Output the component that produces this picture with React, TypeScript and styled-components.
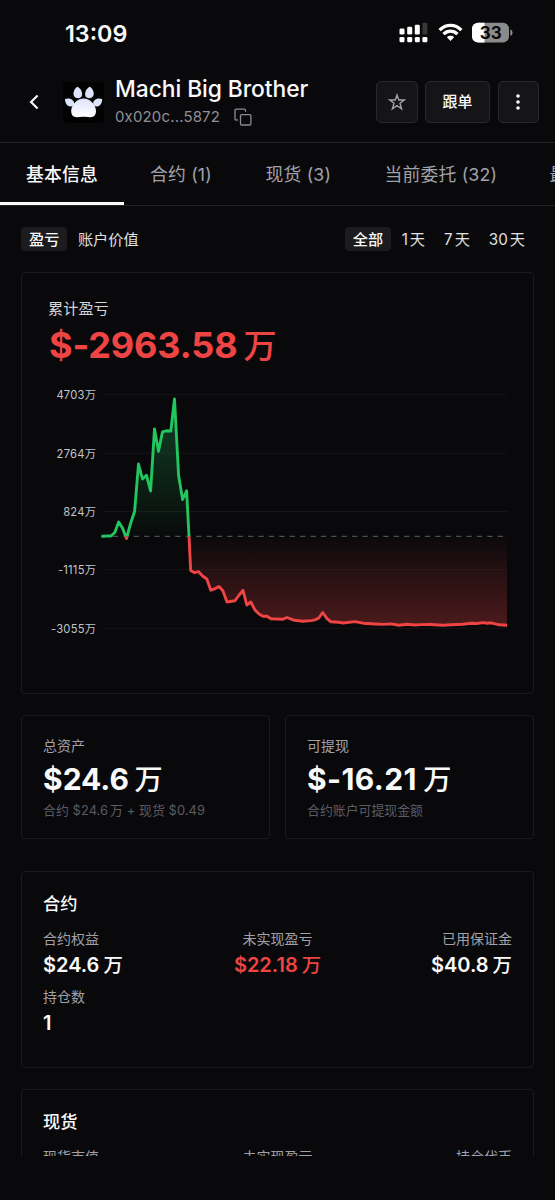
import React from "react";
import styled, { createGlobalStyle } from "styled-components";

const GlobalStyle = createGlobalStyle`
  * { box-sizing: border-box; }
  body {
    margin: 0;
    background: #09090b;
    color: #fafafa;
    font-family: Inter, "Noto Sans CJK SC", sans-serif;
  }
`;

const Screen = styled.div`
  width: 555px;
  height: 1200px;
  display: flex;
  flex-direction: column;
  overflow: hidden;
  background: #09090b;
`;

const StatusBar = styled.div`
  height: 62px;
  flex: none;
  display: flex;
  justify-content: space-between;
  padding: 21px 41px 0 65px;
`;

const Clock = styled.div`
  font-size: 23.3px;
  line-height: 26px;
  font-weight: 600;
  letter-spacing: 0;
`;

const StatusIcons = styled.div`
  display: flex;
  gap: 9.5px;
  padding-top: 1px;
`;

const Header = styled.header`
  height: 81px;
  flex: none;
  display: flex;
  align-items: center;
  padding: 0 16px 0 24px;
  border-bottom: 1px solid #242427;
`;

const BackButton = styled.button`
  width: 20px;
  height: 24px;
  padding: 0;
  border: 0;
  background: none;
  color: #fafafa;
  display: flex;
  align-items: center;
  justify-content: center;
`;

const Avatar = styled.div`
  width: 41px;
  height: 41px;
  margin-left: 19px;
  border-radius: 4px;
  background: #020203;
`;

const Identity = styled.div`
  flex: 1;
  margin-left: 11px;
`;

const Name = styled.div`
  font-size: 22.8px;
  line-height: 30px;
  font-weight: 500;
  letter-spacing: -0.05px;
  white-space: nowrap;
`;

const Address = styled.div`
  display: flex;
  align-items: center;
  gap: 14px;
  font-size: 15px;
  line-height: 26px;
  letter-spacing: 0.15px;
  color: #8f8f97;
`;

const Actions = styled.div`
  display: flex;
  gap: 7.5px;
`;

const ActionButton = styled.button<{ $width: number }>`
  width: ${(p) => p.$width}px;
  height: 42px;
  padding: 0;
  display: flex;
  align-items: center;
  justify-content: center;
  border: 1px solid #2a2a2d;
  border-radius: 5px;
  background: #151517;
  color: #fafafa;
  font: 500 15px/20px Inter, "Noto Sans CJK SC", sans-serif;
`;

const Tabs = styled.nav`
  height: 63px;
  flex: none;
  display: flex;
  overflow: hidden;
  border-bottom: 1px solid #242427;
`;

const Tab = styled.div<{ $width: number; $active?: boolean }>`
  flex: 0 0 ${(p) => p.$width}px;
  padding: 18px 0 0 26px;
  font-size: 17.8px;
  line-height: 28px;
  letter-spacing: 0.2px;
  white-space: nowrap;
  font-weight: ${(p) => (p.$active ? 500 : 400)};
  color: ${(p) => (p.$active ? "#fafafa" : "#a1a1aa")};
  border-bottom: 3px solid ${(p) => (p.$active ? "#fafafa" : "transparent")};
`;

const Content = styled.main`
  flex: 1;
  min-height: 0;
  overflow: hidden;
  padding: 21px 21px 0;
`;

const HomeArea = styled.div`
  height: 44px;
  flex: none;
`;

const FilterRow = styled.div`
  display: flex;
  justify-content: space-between;
  height: 24px;
  margin-bottom: 21px;
`;

const FilterGroup = styled.div<{ $gap: number }>`
  display: flex;
  gap: ${(p) => p.$gap}px;
`;

const Filter = styled.div<{ $active?: boolean; $end?: number }>`
  height: 24px;
  padding: 1px ${(p) => (p.$active ? 8 : 0)}px 0;
  margin-right: ${(p) => p.$end ?? 0}px;
  border-radius: 4px;
  background: ${(p) => (p.$active ? "#1c1c1f" : "transparent")};
  font-size: 15.2px;
  line-height: 24px;
  white-space: nowrap;
  font-weight: ${(p) => (p.$active ? 500 : 400)};
  color: ${(p) => (p.$active ? "#fafafa" : "#e0e0e3")};
`;

const Unit = styled.span<{ $gap: number; $size?: number }>`
  margin-left: ${(p) => p.$gap}px;
  font-size: ${(p) => p.$size ?? 1}em;
`;

const Card = styled.section<{ $height: number; $top?: number }>`
  height: ${(p) => p.$height}px;
  margin-top: ${(p) => p.$top ?? 0}px;
  border: 1px solid #1b1b1e;
  border-radius: 4px;
  padding: 20px 21px;
`;

const ChartCard = styled(Card)`
  padding: 24px 26px 0;
`;

const ChartTitle = styled.div`
  font-size: 15.2px;
  line-height: 24px;
  color: #d4d4d8;
`;

const Total = styled.div`
  height: 48px;
  padding-left: 1px;
  font-size: 36px;
  line-height: 48px;
  margin-bottom: 16px;
  font-weight: 700;
  letter-spacing: -0.15px;
  color: #ef4444;
  white-space: nowrap;
`;

const ChartSvg = styled.svg`
  display: block;
`;

const Pair = styled.div`
  display: grid;
  grid-template-columns: 1fr 1fr;
  gap: 15px;
`;

const Label = styled.div`
  font-size: 14px;
  line-height: 20px;
  color: #a1a1aa;
  white-space: nowrap;
`;

const Amount = styled.div<{ $tracking?: number }>`
  height: 38px;
  margin-top: 4px;
  font-size: 30px;
  line-height: 38px;
  font-weight: 700;
  letter-spacing: ${(p) => p.$tracking ?? 0}px;
  white-space: nowrap;
`;

const Note = styled.div<{ $tracking?: number }>`
  margin-top: 3px;
  font-size: 12.9px;
  line-height: 20px;
  letter-spacing: ${(p) => p.$tracking ?? 0}px;
  color: #5b5b63;
  white-space: nowrap;
`;

const SectionTitle = styled.h2`
  margin: 0 0 13px;
  font-size: 17.2px;
  line-height: 24px;
  font-weight: 500;
`;

const Stats = styled.div`
  display: grid;
  grid-template-columns: repeat(3, 1fr);
  row-gap: 8px;
`;

const Stat = styled.div<{ $align?: string }>`
  text-align: ${(p) => p.$align ?? "left"};
`;

const StatValue = styled.div<{ $negative?: boolean }>`
  height: 28px;
  margin-top: 2px;
  font-size: 20px;
  line-height: 28px;
  font-weight: 600;
  white-space: nowrap;
  color: ${(p) => (p.$negative ? "#ef4444" : "#fafafa")};
`;

const HeavyUnit = styled(Unit)`
  font-weight: 500;
`;

const Wan = ({ gap, size }: { gap: number; size?: number }) => (
  size ? <HeavyUnit $gap={gap} $size={size}>万</HeavyUnit> : <Unit $gap={gap}>万</Unit>
);

const Day = () => <Unit $gap={2}>天</Unit>;

const LINE: [number, number][] = [
  [102.5, 536.3], [107, 536], [111, 536], [114.8, 532.5], [118.7, 522], [122.5, 528], [126.5, 538.5],
  [130.7, 523], [134.6, 511.5], [138.5, 464], [142.5, 479], [146.5, 475.3], [150.6, 491], [154.5, 429],
  [158.5, 451.3], [162.5, 431.8], [166.5, 430.8], [170.8, 431], [174.5, 399], [178.6, 475.5], [182.6, 499.5],
  [186.6, 490.8], [189, 536], [190.7, 570.5], [194.6, 572.7], [198.6, 571.7], [202.6, 576], [206.8, 579],
  [210.8, 590.2], [214.8, 588.8], [219, 586.4], [223, 591], [227, 602], [234.8, 600.8], [238.8, 595.5],
  [243, 590.3], [246.8, 605], [250.8, 602], [255, 610], [259, 614], [263, 616.2], [267, 616.3], [271, 618.8],
  [283, 619.2], [287, 617.5], [294.5, 620.3], [303, 621.2], [311, 620.6], [315, 619.9], [318.8, 618],
  [322.7, 612.5], [327, 618.6], [331, 621.8], [339, 622.3], [343, 623], [355, 621.6], [363, 623.2],
  [375, 624], [383, 624.4], [391, 623.9], [399, 625.2], [407, 624.2], [415, 625], [421, 624.6], [431, 624.5],
  [443, 625.2], [451, 624.8], [463, 624.3], [471, 623.2], [477, 623.5], [483, 622.6], [487, 623.3],
  [491, 622.8], [499, 624.8], [507, 625.2],
];

const ZERO = 536;
const line = LINE.map(([x, y]) => `${x},${y}`).join(" ");
const area = `102.5,${ZERO} ${line} 507,${ZERO}`;

const TICKS: [string, number][] = [
  ["4703", 394.7], ["2764", 453.2], ["824", 511.5], ["-1115", 569.8], ["-3055", 628.2],
];

const PnlChart = () => (
  <ChartSvg width="459" height="255" viewBox="48 385 459 255">
    <defs>
      <linearGradient id="gain" gradientUnits="userSpaceOnUse" x1="0" y1="399" x2="0" y2="536">
        <stop offset="0" stopColor="#22c55e" stopOpacity="0.3" />
        <stop offset="1" stopColor="#22c55e" stopOpacity="0.01" />
      </linearGradient>
      <linearGradient id="loss" gradientUnits="userSpaceOnUse" x1="0" y1="536" x2="0" y2="626">
        <stop offset="0" stopColor="#ef4444" stopOpacity="0.01" />
        <stop offset="1" stopColor="#ef4444" stopOpacity="0.29" />
      </linearGradient>
      <clipPath id="above"><path d="M90 380H510V536.5H118V545H90Z" /></clipPath>
      <clipPath id="below"><rect x="118" y="536.5" width="400" height="110" /></clipPath>
    </defs>
    {TICKS.map(([label, y]) => (
      <g key={label}>
        <text x="96.2" y={y + 4.4} textAnchor="end" fontSize="11.2" letterSpacing="0.25" fill="#c4c4c8">{label}万</text>
        <line x1="102.5" x2="507" y1={y} y2={y} stroke="#161618" strokeWidth="1.1" />
      </g>
    ))}
    <polygon points={area} fill="url(#gain)" clipPath="url(#above)" />
    <polygon points={area} fill="url(#loss)" clipPath="url(#below)" />
    <line x1="102.5" x2="507" y1="536.3" y2="536.3" stroke="#4c4c52" strokeWidth="1.3" strokeDasharray="5.2 5.2" />
    <g fill="none" strokeWidth="2.9" strokeLinejoin="round" strokeLinecap="round">
      <polyline points={line} stroke="#22c55e" clipPath="url(#above)" />
      <polyline points={line} stroke="#ef4444" clipPath="url(#below)" />
    </g>
  </ChartSvg>
);

const SignalIcon = () => (
  <svg width="29" height="21" viewBox="0 0 29 21" fill="#fff">
    <rect x="0.5" y="6.5" width="5" height="6" rx="1.2" />
    <rect x="8.2" y="4.7" width="5" height="7.8" rx="1.2" />
    <rect x="15.8" y="2.7" width="5" height="9.8" rx="1.2" />
    <rect x="23.4" y="0.7" width="5" height="11.8" rx="1.2" fill="#38383b" />
    {[0.5, 8.2, 15.8, 23.4].map((x) => <rect key={x} x={x} y="15" width="5" height="5.3" rx="1.3" />)}
  </svg>
);

const WifiIcon = () => (
  <svg width="25" height="21" viewBox="0 0 25 21" fill="none" stroke="#fff" strokeWidth="3.3">
    <path d="M1.6 8.1C7.8 1.8 17.2 1.8 23.4 8.1" />
    <path d="M5.5 12.2C9.5 8.2 15.5 8.2 19.5 12.2" />
    <path d="M12.5 18.9L8.9 15.2C10.9 13.3 14.1 13.3 16.1 15.2Z" fill="#fff" stroke="none" />
  </svg>
);

const BatteryIcon = () => (
  <svg width="42" height="21" viewBox="0 0 42 21">
    <defs><clipPath id="cell"><rect x="0" y="0.8" width="37" height="19.8" rx="6.2" /></clipPath></defs>
    <g clipPath="url(#cell)">
      <rect width="37" height="21" fill="#8b8b8c" />
      <rect width="12.5" height="21" fill="#fff" />
    </g>
    <path d="M38.3 7.6Q40.6 8.2 40.6 10.7T38.3 13.8Z" fill="#8b8b8c" />
    <text x="18.7" y="16.8" textAnchor="middle" fontSize="17" fontWeight="700" fill="#09090b">33</text>
  </svg>
);

const PawIcon = () => (
  <svg width="41" height="41" viewBox="0 0 41 41">
    <defs>
      <linearGradient id="paw" x1="0" y1="0" x2="0" y2="1">
        <stop offset="0" stopColor="#dfe2fa" />
        <stop offset="1" stopColor="#fff" />
      </linearGradient>
    </defs>
    <g fill="#dce4fb">
      <path d="M14.4 4.8C18 6.8 19.9 10.5 18.8 14C17.8 16.8 12.8 17 11 14C9.6 11 11.2 6.8 14.4 4.8Z" />
      <path d="M26.8 4.8C23.2 6.8 21.3 10.5 22.4 14C23.4 16.8 28.4 17 30.2 14C31.6 11 30 6.8 26.8 4.8Z" />
      <path d="M2 16.9C6.2 15.4 10.8 17.3 11.1 21C11.3 24.3 7.5 25.6 4.6 23.6C2.8 22 2 19.6 2 16.9Z" />
      <path d="M39.2 16.9C35 15.4 30.4 17.3 30.1 21C29.9 24.3 33.7 25.6 36.6 23.6C38.4 22 39.2 19.6 39.2 16.9Z" />
    </g>
    <path d="M20.6 16.6C27 16.6 33 23 33 29C33 34.4 29.5 35.8 25.3 35Q20.6 34.4 15.9 35C11.7 35.8 8.2 34.4 8.2 29C8.2 23 14.2 16.6 20.6 16.6Z" fill="url(#paw)" />
  </svg>
);

const CopyIcon = () => (
  <svg width="18" height="18" viewBox="0 0 18 18" fill="none" stroke="#8b8b92" strokeWidth="1.3" strokeLinejoin="round" strokeLinecap="round">
    <rect x="6.5" y="6.6" width="10.4" height="10.4" rx="1.2" />
    <path d="M3.3 12H2.2Q1 12 1 10.8V2.4Q1 1.1 2.3 1.1H10.2Q11.5 1.1 11.5 2.4V3.3" />
  </svg>
);

const StarIcon = () => (
  <svg width="18" height="18" viewBox="0 0 18 18" fill="none" stroke="#a1a1aa" strokeWidth="1.4" strokeLinejoin="miter">
    <path d="M9 2L10.8 7H16.2L12 10.3L13.6 15.8L9 12.6L4.4 15.8L6 10.3L1.8 7H7.2Z" />
  </svg>
);

export default function App() {
  return (
    <>
      <GlobalStyle />
      <Screen>
        <StatusBar>
          <Clock>13:09</Clock>
          <StatusIcons><SignalIcon /><WifiIcon /><BatteryIcon /></StatusIcons>
        </StatusBar>
        <Header>
          <BackButton>
            <svg width="12" height="18" viewBox="0 0 12 18" fill="none" stroke="currentColor" strokeWidth="2.1">
              <path d="M9.6 2.4L3 9L9.6 15.6" />
            </svg>
          </BackButton>
          <Avatar><PawIcon /></Avatar>
          <Identity>
            <Name>Machi Big Brother</Name>
            <Address>0x020c...5872 <CopyIcon /></Address>
          </Identity>
          <Actions>
            <ActionButton $width={41.5}><StarIcon /></ActionButton>
            <ActionButton $width={65}>跟单</ActionButton>
            <ActionButton $width={41.5}>
              <svg width="6" height="18" viewBox="0 0 6 18" fill="currentColor">
                <circle cx="3" cy="3" r="1.8" /><circle cx="3" cy="9" r="1.8" /><circle cx="3" cy="15" r="1.8" />
              </svg>
            </ActionButton>
          </Actions>
        </Header>
        <Tabs>
          <Tab $width={124} $active>基本信息</Tab>
          <Tab $width={115.5}>合约 (1)</Tab>
          <Tab $width={119}>现货 (3)</Tab>
          <Tab $width={165}>当前委托 (32)</Tab>
          <Tab $width={130}>最近成交</Tab>
        </Tabs>
        <Content>
          <FilterRow>
            <FilterGroup $gap={10.5}>
              <Filter $active>盈亏</Filter>
              <Filter>账户价值</Filter>
            </FilterGroup>
            <FilterGroup $gap={0}>
              <Filter $active $end={10.5}>全部</Filter>
              <Filter $end={19}>1<Day /></Filter>
              <Filter $end={19}>7<Day /></Filter>
              <Filter $end={9}>30<Day /></Filter>
            </FilterGroup>
          </FilterRow>
          <ChartCard $height={422}>
            <ChartTitle>累计盈亏</ChartTitle>
            <Total>$-2963.58<Wan gap={6} size={0.92} /></Total>
            <PnlChart />
          </ChartCard>
          <Pair>
            <Card $height={124} $top={21}>
              <Label>总资产</Label>
              <Amount>$24.6<Wan gap={5.5} size={0.94} /></Amount>
              <Note $tracking={0.06}>合约 $24.6<Wan gap={2} /> + 现货 $0.49</Note>
            </Card>
            <Card $height={124} $top={21}>
              <Label>可提现</Label>
              <Amount $tracking={0.4}>$-16.21<Wan gap={6.5} size={0.94} /></Amount>
              <Note>合约账户可提现金额</Note>
            </Card>
          </Pair>
          <Card $height={197} $top={32}>
            <SectionTitle>合约</SectionTitle>
            <Stats>
              <Stat><Label>合约权益</Label><StatValue>$24.6<Wan gap={4} size={0.97} /></StatValue></Stat>
              <Stat $align="center"><Label>未实现盈亏</Label><StatValue $negative>$22.18<Wan gap={4} size={0.97} /></StatValue></Stat>
              <Stat $align="right"><Label>已用保证金</Label><StatValue>$40.8<Wan gap={4} size={0.97} /></StatValue></Stat>
              <Stat><Label>持仓数</Label><StatValue>1</StatValue></Stat>
            </Stats>
          </Card>
          <Card $height={197} $top={21}>
            <SectionTitle>现货</SectionTitle>
            <Stats>
              <Stat><Label>现货市值</Label></Stat>
              <Stat $align="center"><Label>未实现盈亏</Label></Stat>
              <Stat $align="right"><Label>持仓代币</Label></Stat>
            </Stats>
          </Card>
        </Content>
        <HomeArea />
      </Screen>
    </>
  );
}
